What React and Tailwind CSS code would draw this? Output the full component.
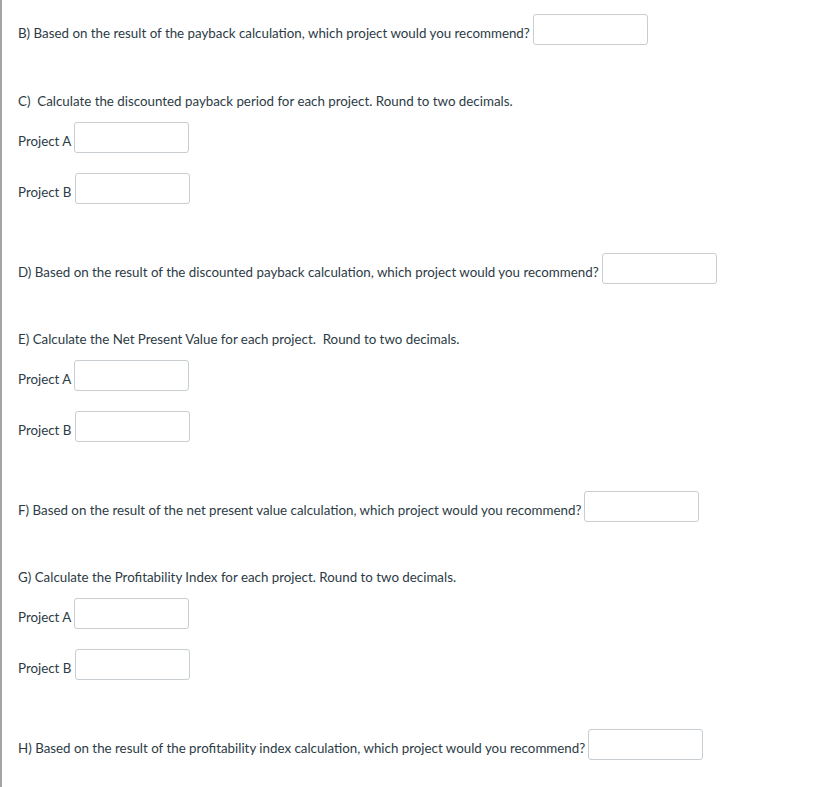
import React from 'react';

function Box({ className = '' }) {
  return <input type="text" className={`h-[31px] w-[115px] rounded-[3px] border border-[#c7cdd1] bg-white px-2 outline-none ${className}`} />;
}

function Label({ children }) {
  // text sits a little below the box's middle, as with baseline alignment
  return <span className="mt-[6px]">{children}</span>;
}

function Recommend({ text, className = '' }) {
  return (
    <div className={`flex items-center ${className}`}>
      <Label>{text}</Label>
      <Box className="ml-[3px]" />
    </div>
  );
}

function Projects() {
  return (
    <div className="mt-[11px] flex flex-col gap-[20px]">
      <div className="flex items-center">
        <Label>Project A</Label>
        <Box className="ml-[3px]" />
      </div>
      <div className="flex items-center">
        <Label>Project B</Label>
        <Box className="ml-[4px]" />
      </div>
    </div>
  );
}

export default function App() {
  return (
    <div className="min-h-[787px] w-[829px] bg-white">
      <div className="min-h-[787px] border-l-2 border-[#a5a5a5] pl-[16px] pt-[14px] text-[13.33px] leading-[20px] text-[#2d3b45] font-['Lato','Liberation_Sans',sans-serif]">
        <Recommend text="B) Based on the result of the payback calculation, which project would you recommend?" />

        <p className="mt-[46px]">C)&nbsp; Calculate the discounted payback period for each project. Round to two decimals.</p>
        <Projects />

        <Recommend className="mt-[49px]" text="D) Based on the result of the discounted payback calculation, which project would you recommend?" />

        <p className="mt-[45px]">E) Calculate the Net Present Value for each project.&nbsp; Round to two decimals.</p>
        <Projects />

        <Recommend className="mt-[49px]" text="F) Based on the result of the net present value calculation, which project would you recommend?" />

        <p className="mt-[45px]">G) Calculate the Profitability Index for each project. Round to two decimals.</p>
        <Projects />

        <Recommend className="mt-[49px]" text="H) Based on the result of the profitability index calculation, which project would you recommend?" />
      </div>
    </div>
  );
}
